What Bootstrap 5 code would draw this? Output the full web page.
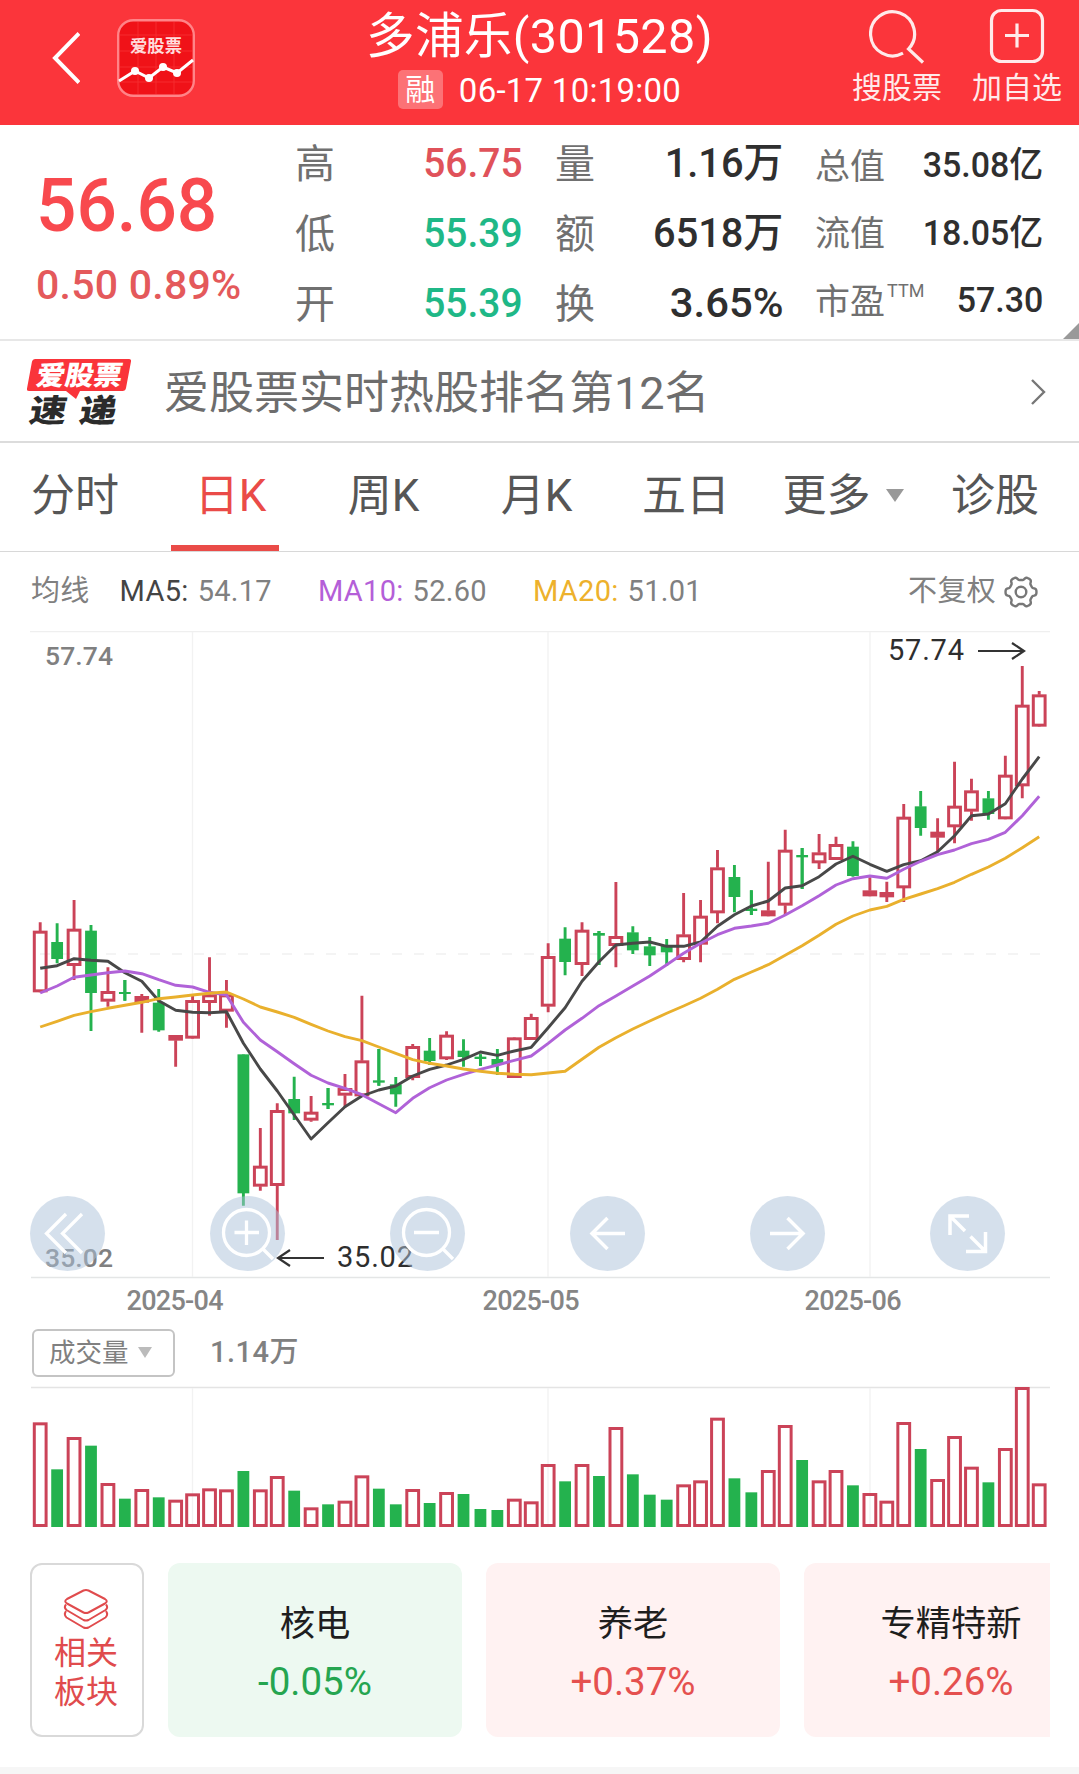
<!DOCTYPE html>
<html lang="zh-CN">
<head>
<meta charset="utf-8">
<meta name="viewport" content="width=device-width, initial-scale=1">
<title>多浦乐(301528)</title>
<link href="https://cdn.jsdelivr.net/npm/bootstrap@5.3.0/dist/css/bootstrap.min.css" rel="stylesheet">
<style>
  body { font-family: Roboto, "Noto Sans CJK SC", sans-serif; background: #fff; color: #333; width: 1079px; height: 1774px; overflow: hidden; }
  svg { display: block; flex: none; }
  .topbar { height: 125px; background: #fb353b; color: #fff; }
  .side { width: 240px; flex: none; }
  .side-left { height: 116px; }
  .side-right { padding: 8px 17px 0 0; gap: 30px; }
  .logo-tile { margin-left: 37px; }
  .ttl { font-size: 48.5px; line-height: 58px; margin-top: 8px; white-space: nowrap; letter-spacing: .4px; }
  .subttl { font-size: 33px; line-height: 42px; gap: 16px; white-space: nowrap; letter-spacing: .25px; }
  .subttl .when { padding-top: 4px; }
  .rong { background: rgba(255,255,255,.3); font-size: 30px; line-height: 39px; width: 45px; height: 39px; border-radius: 5px; text-align: center; }
  .act { width: 90px; font-size: 30px; line-height: 36px; color: #ffeaea; white-space: nowrap; }
  .act svg { margin-bottom: 6px; }

  .quote { height: 216px; border-bottom: 2px solid #e7e7e7; padding: 3px 36px 0 37px; gap: 32px; }
  .price-col { width: 226px; flex: none; color: #e4595b; white-space: nowrap; }
  .price { font-size: 74px; line-height: 80px; font-weight: 500; color: #f8494e; margin: 38px 0 0 -1px; transform: scaleX(.96); transform-origin: 0 0; }
  .chg { font-size: 41px; line-height: 50px; margin: 14px 0 0 -1px; font-weight: 500; letter-spacing: .25px; }
  .stat-col { width: 228px; flex: none; white-space: nowrap; }
  .stat-col > div { height: 70px; line-height: 70px; font-size: 40px; color: #707070; }
  .stat-col > div > span { padding-top: 1.5px; }
  .stat-col b { font-size: 41px; font-weight: 500; color: #2f2f2f; transform: scaleX(.97); transform-origin: 100% 0; }
  .stat-col b.pct { transform: scaleX(1.02); }
  .stat-col .up { color: #e0525a; transform: scaleX(.95); }
  .stat-col .dn { color: #1fb887; transform: scaleX(.95); }
  .stat-col.thin { padding-top: 4px; }
  .stat-col.thin > div { height: 67.5px; line-height: 67.5px; font-size: 35px; }
  .stat-col.thin b { font-size: 35px; }
  .ttm { font-size: 18px; position: relative; top: -17px; margin-left: 2px; line-height: 0; }
  .fold { position: absolute; right: 0; bottom: 0; width: 16px; height: 16px; background: #999; clip-path: polygon(100% 0, 100% 100%, 0 100%); }

  .news { height: 102px; border-bottom: 2px solid #dcdcdc; padding: 2px 33px 0 26px; }
  .news svg { overflow: visible; }
  .news-text { font-size: 45px; line-height: 60px; color: #6d6d6d; margin-left: 30px; padding-top: 4px; white-space: nowrap; }
  .tabs { height: 109px; border-bottom: 1px solid #d8d8d8; display: grid; grid-template-columns: 150px 150px 167px 139px 160px 154px 150px; }
  .tabs .tab-item { color: #565656; font-size: 44px; line-height: 102px; padding-top: 3px; height: 108px; white-space: nowrap; display: flex; justify-content: center; align-items: center; border-bottom: 6px solid transparent; }
  .tabs .tab-item.on { color: #ea4b48; border-color: #ea4b48; margin: 0 21px; padding-left: 11px; }
  .tabs svg { margin-left: 15px; }

  .ma { height: 79px; padding: 1px 41px 0 31px; font-size: 29px; color: #808080; letter-spacing: .3px; white-space: nowrap; }
  .ma span b { font-weight: 400; margin-right: 9px; }
  .ma .m5 { color: #444; } .ma .m10 { color: #b45fd8; } .ma .m20 { color: #edb12c; }
  .gap-a { margin-right: 30px; } .gap-b { margin-right: 46px; }
  .nav-tools { position: absolute; left: 30px; right: 74px; bottom: 8px; }
  .nav-tools span { width: 75px; height: 75px; border-radius: 50%; background: rgba(171,193,217,.5); }
  .volhead { height: 59px; padding-left: 32px; }
  .volsel { width: 143px; height: 48px; border: 2px solid #c4c4c4; border-radius: 6px; font-size: 26.5px; color: #808080; white-space: nowrap; padding-left: 15px; }
  .volsel svg { margin-left: 9px; }
  .volnow { font-size: 29px; font-weight: 500; color: #808080; margin-left: 35px; letter-spacing: .5px; }

  .sectors { margin: 36px 29px 0 30px; gap: 24px; overflow: hidden; }
  .sec-btn { width: 114px; height: 174px; flex: none; border: 2px solid #d9d9d9; border-radius: 12px; color: #e04b4d; font-size: 32px; line-height: 39px; padding: 23px 2px 0 0; }
  .sec-btn svg { margin-bottom: 4px; }
  .sec { width: 294px; height: 174px; flex: none; border-radius: 12px; background: #fff2f2; text-align: center; padding-top: 35px; white-space: nowrap; }
  .sec div { font-size: 35.3px; line-height: 52px; color: #1e1e1e; }
  .sec p { font-size: 38.5px; line-height: 52px; margin: 6px 0 0; color: #e5504f; }
  .sec.down { background: #edf9f1; }
  .sec.down p { color: #25a550; }
  .foot { height: 7px; margin-top: 30px; background: #f6f6f6; }
</style>
<script src="https://cdn.jsdelivr.net/npm/bootstrap@5.3.0/dist/js/bootstrap.bundle.min.js"></script>
</head>
<body>
<header class="topbar d-flex">
  <div class="side side-left d-flex align-items-center">
    <svg width="80" height="60" viewBox="0 28 80 60" fill="none" stroke="#fff" stroke-width="4"><path d="M79 33.500L55 58L79 82.500"/></svg>
    <svg class="logo-tile" width="78" height="78" viewBox="0 0 78 78">
      <rect x="1.200" y="1.200" width="75.600" height="75.600" rx="15" fill="#f01218" stroke="#ff8488" stroke-width="2.400"/>
      <path d="M21 3V75M39 3V75M57 3V75M3 16H75M3 32H75M3 48H75M3 63H75" stroke="#ff4a4a" stroke-width="1" opacity=".45"/>
      <text x="39" y="32.500" text-anchor="middle" font-family="Noto Sans CJK SC" font-weight="700" font-size="17.300" fill="#ffdcdc">爱股票</text>
      <path d="M2 62L18 52L32 59L46 48L60 54L76 41" fill="none" stroke="#fff" stroke-width="3"/>
      <g fill="#fff"><circle cx="18" cy="52" r="4"/><circle cx="32" cy="59" r="4"/><circle cx="46" cy="48" r="4"/><circle cx="60" cy="54" r="4"/></g>
    </svg>
  </div>
  <div class="flex-grow-1 d-flex flex-column align-items-center">
    <div class="ttl">多浦乐(301528)</div>
    <div class="subttl d-flex align-items-center"><span class="rong">融</span><span class="when">06-17 10:19:00</span></div>
  </div>
  <div class="side side-right d-flex justify-content-end">
    <div class="act d-flex flex-column align-items-center">
      <svg width="56" height="56" viewBox="0 0 56 56" fill="none" stroke="#ffeaea" stroke-width="3.200"><path d="M34 45.200A22 22 0 1 1 39.500 41L54 54.500"/></svg>搜股票
    </div>
    <div class="act d-flex flex-column align-items-center">
      <svg width="56" height="56" viewBox="0 0 56 56" fill="none" stroke="#ffeaea" stroke-width="3.200"><rect x="2.500" y="2.500" width="51" height="51" rx="10"/><path d="M28 15.500V39.500M16 27.500H40"/></svg>加自选
    </div>
  </div>
</header>

<section class="quote d-flex position-relative">
  <div class="price-col"><div class="price">56.68</div><div class="chg">0.50 0.89%</div></div>
  <div class="stat-col">
    <div class="d-flex justify-content-between"><span>高</span><b class="up">56.75</b></div>
    <div class="d-flex justify-content-between"><span>低</span><b class="dn">55.39</b></div>
    <div class="d-flex justify-content-between"><span>开</span><b class="dn">55.39</b></div>
  </div>
  <div class="stat-col">
    <div class="d-flex justify-content-between"><span>量</span><b>1.16万</b></div>
    <div class="d-flex justify-content-between"><span>额</span><b>6518万</b></div>
    <div class="d-flex justify-content-between"><span>换</span><b class="pct">3.65%</b></div>
  </div>
  <div class="stat-col thin">
    <div class="d-flex justify-content-between"><span>总值</span><b>35.08亿</b></div>
    <div class="d-flex justify-content-between"><span>流值</span><b>18.05亿</b></div>
    <div class="d-flex justify-content-between"><span>市盈<span class="ttm">TTM</span></span><b>57.30</b></div>
  </div>
  <i class="fold"></i>
</section>

<section class="news d-flex align-items-center">
  <svg width="108" height="72" viewBox="26 356 108 72">
    <path d="M35 359H129Q131.500 359 131 361.500L126 388Q125.500 391 122.500 391H80L76 399L66 391H29Q26.500 391 27 388.500L32 361.500Q32.500 359 35 359Z" fill="#fa343a"/>
    <g font-family="Noto Sans CJK SC" font-weight="900">
      <text transform="translate(35 384.500) skewX(-10)" font-size="27" textLength="86" lengthAdjust="spacingAndGlyphs" fill="#fff">爱股票</text>
      <text transform="translate(28 422) skewX(-10) scale(1.120 .960)" font-size="33" fill="#2b2b2b">速</text>
      <text transform="translate(78 422) skewX(-10) scale(1.120 .960)" font-size="33" fill="#2b2b2b">递</text>
    </g>
  </svg>
  <div class="news-text flex-grow-1">爱股票实时热股排名第12名</div>
  <svg width="16" height="28" viewBox="0 0 16 28" fill="none" stroke="#777" stroke-width="2.400"><path d="M2 2L14 14L2 26"/></svg>
</section>

<nav class="tabs">
  <div class="tab-item">分时</div><div class="tab-item on">日K</div><div class="tab-item">周K</div><div class="tab-item">月K</div><div class="tab-item">五日</div>
  <div class="tab-item">更多<svg width="18" height="13" viewBox="0 0 18 13"><path d="M0 0H18L9 13Z" fill="#999"/></svg></div><div class="tab-item">诊股</div>
</nav>

<div class="ma d-flex align-items-center">
  <span class="gap-a">均线</span>
  <span class="gap-b"><b class="m5">MA5:</b>54.17</span>
  <span class="gap-b"><b class="m10">MA10:</b>52.60</span>
  <span><b class="m20">MA20:</b>51.01</span>
  <span class="ms-auto me-2">不复权</span>
  <svg width="34" height="34" viewBox="-17 -17 34 34" fill="none" stroke="#777" stroke-width="2.400" stroke-linejoin="round"><circle r="5.300"/><path id="gear"/></svg>
</div>

<div class="position-relative">
  <svg id="kline" width="1079" height="648" viewBox="0 631 1079 648"></svg>
  <div class="nav-tools d-flex justify-content-between">
    <span><svg width="75" height="75" viewBox="0 0 75 75" fill="none" stroke="#fff" stroke-width="3.300"><path d="M36 18L16.500 37.500L36 57M52 18L32.500 37.500L52 57"/></svg></span>
    <span><svg width="75" height="75" viewBox="0 0 75 75" fill="none" stroke="#fff" stroke-width="3.300"><circle cx="36.500" cy="36.500" r="23"/><path d="M53 53L63 63M24.500 36.500H49M36.500 24.500V49"/></svg></span>
    <span><svg width="75" height="75" viewBox="0 0 75 75" fill="none" stroke="#fff" stroke-width="3.300"><circle cx="36.500" cy="36.500" r="23"/><path d="M53 53L63 63M24 36.500H49"/></svg></span>
    <span><svg width="75" height="75" viewBox="0 0 75 75" fill="none" stroke="#fff" stroke-width="3.500"><path d="M37.500 22L22 37.500L37.500 53M22 37.500H55"/></svg></span>
    <span><svg width="75" height="75" viewBox="0 0 75 75" fill="none" stroke="#fff" stroke-width="3.500"><path d="M37.500 22L53 37.500L37.500 53M53 37.500H20"/></svg></span>
    <span><svg width="75" height="75" viewBox="0 0 75 75" fill="none" stroke="#fff" stroke-width="3.500"><path d="M39 20H20V39M20 20L35 35M36 55.500H55.500V36M55.500 55.500L40.500 40.500"/></svg></span>
  </div>
</div>
<svg width="1079" height="44" viewBox="0 1279 1079 44" fill="#858585" font-size="27" font-weight="500">
  <text x="175" y="1309.500" text-anchor="middle" textLength="97">2025-04</text><text x="531" y="1309.500" text-anchor="middle" textLength="97">2025-05</text><text x="853" y="1309.500" text-anchor="middle" textLength="97">2025-06</text>
</svg>
<div class="volhead d-flex align-items-center">
  <div class="volsel d-flex align-items-center">成交量<svg width="14" height="11" viewBox="0 0 14 11"><path d="M0 0H14L7 11Z" fill="#bbb"/></svg></div>
  <div class="volnow">1.14万</div>
</div>
<svg id="vol" width="1079" height="145" viewBox="0 1382 1079 145"></svg>

<section class="sectors d-flex">
  <div class="sec-btn d-flex flex-column align-items-center">
    <svg width="46" height="42" viewBox="0 0 46 42" fill="none" stroke="#e04b4d" stroke-width="2" stroke-linejoin="round"><path d="M20.500 2.500Q23 1.300 25.500 2.500L42 11Q45.500 13 42 15.500L25.500 24.500Q23 25.500 20.500 24.500L4 15.500Q.5 13 4 11Z"/><path d="M3 16.500Q.5 19.500 3.500 22L20.500 32Q23 33 25.500 32L42.500 22Q45.500 19.500 43 16.500"/><path d="M3 23Q.5 27 3.500 29.500L20.500 39.500Q23 40.500 25.500 39.500L42.500 29.500Q45.500 27 43 23"/></svg>
    <span>相关</span><span>板块</span>
  </div>
  <div class="sec down"><div>核电</div><p>-0.05%</p></div>
  <div class="sec"><div>养老</div><p>+0.37%</p></div>
  <div class="sec"><div>专精特新</div><p>+0.26%</p></div>
</section>
<div class="foot"></div>

<script>
  const RED = '#cb4358', GREEN = '#24b24e', STEP = 999 / 59;
  const X = i => 40.2 + i * STEP;
  // direction, high, body top, body bottom, low: thirds of a pixel below the band's base line
  const early = `R 187 212 397 397|G 190 246 297 310|R 120 206 318 360|G 195 212 399 513|R 322 393 425 440|G 360 396 402 422|R 402 408 428 518|G 387 428 511 515|R 525 525 542 620|R 408 420 536 536|R 292 403 429 467|R 360 403 455 503|G 583 583 1000 1037|R 804 917 980 992|R 730 750 978 1140|G 650 717 760 780|R 708 755 782 785|G 684 729 736 747|R 642 684 707 742|R 407 601 709 709|G 567 661 668 677|G 651 673 703 740|R 552 558 654 661|G 534 572 603 615|R 514 524 598 600|G 538 572 591 620|G 583 590 597 618|G 567 597 615 645|R 532 532 654 654|R 461 471 540 540|R 250 288 440 457|G 202 236 306 346|R 187 209 315 348|G 213 219 227 315|R 66 228 258 322|G 199 217 271 282|G 231 259 286 318|G 237 258 277 318|R 99 223 300 307|R 120 167 254 307`;
  const late = `R 690 742 880 910|G 735 771 831 877|G 811 866 873 885|R 725 871 889 889|R 629 689 857 885|G 684 705 712 807|R 642 697 730 747|R 650 672 720 720|G 664 680 768 770|R 772 811 829 829|R 785 816 832 846|R 552 590 805 846|G 513 559 624 647|R 595 635 653 695|R 425 557 622 670|R 476 511 575 602|G 513 535 582 599|R 407 464 598 598|R 138 254 499 535|R 213 223 320 320`;
  const parse = (s, base) => s.split('|').map(r => { const [d, ...v] = r.split(' '); return [d, ...v.map(n => base + n / 3)]; });
  const candles = parse(early, 860).concat(parse(late, 620));
  const line = (a, b) => a.map(n => 860 + n / 3).concat(b.map(n => 620 + n / 3));
  const ma5 = line([325,317,296,301,304,338,364,422,451,457,458,455,550,627,693,765,837,788,740,708,690,678,648,628,615,598,576,586,573,562,503,443,364,305,255,250,246,259,259,246],[919,884,858,843,804,797,770,732,709,733,754,734,722,695,647,587,582,551,477,410]);
  const ma10 = line([399,378,352,345,338,333,341,359,376,381,397,405,487,540,575,611,646,669,685,704,731,758,715,683,660,643,628,615,601,588,550,510,475,437,408,378,348,314,280,250],[944,925,918,910,885,857,827,795,776,768,775,748,724,704,690,671,658,637,587,529]);
  const ma20 = line([501,484,466,455,445,436,427,416,411,405,400,396,417,441,456,472,493,513,530,542,561,580,599,610,618,627,634,640,643,644,639,634,598,562,533,507,483,460,438,415],[1108,1078,1056,1034,1006,977,946,913,888,870,859,838,822,806,787,763,741,715,683,650]);
  const vol = [427,568,471,497,609,656,627,652,659,640,625,628,573,628,588,632,682,673,662,586,626,673,627,669,636,642,687,690,656,664,552,604,552,588,441,583,644,659,613,601,413,595,637,570,435,540,601,570,616,639,662,426,507,597,468,560,607,504,321,610];

  const body = (d, x, t, b) => {
    if (d === 'G') return `<rect x="${x - 5.9}" y="${t}" width="11.800" height="${b - t}" fill="${GREEN}"/>`;
    const h = b - t;
    if (h < 7) return `<rect x="${x - 7.3}" y="${t}" width="14.600" height="${h}" fill="${RED}"/>`;
    return `<rect x="${x - 5.9}" y="${t + 1.5}" width="11.800" height="${h - 3}" fill="none" stroke="${RED}" stroke-width="3"/>`;
  };
  const path = (a, c) => `<path d="M${a.map((y, i) => X(i).toFixed(1) + ' ' + y.toFixed(1)).join('L')}" fill="none" stroke="${c}" stroke-width="2.900" stroke-linejoin="round"/>`;
  const grid = (t, b) => [192.5, 548, 870].map(x => `<path d="M${x} ${t}V${b}" stroke="#f2f2f2" stroke-width="1.300"/>`).join('');

  let k = '<path d="M30 631.500H1050" stroke="#efefef" stroke-width="1.600"/><path d="M31 1277.500H1050" stroke="#e4e6e6" stroke-width="1.400"/>' + grid(632, 1277) +
    '<path d="M40 954H1040" stroke="#f1f1f1" stroke-width="1.300" stroke-dasharray="10 12"/>';
  candles.forEach(([d, h, t, b, l], i) => {
    const x = X(i), c = d === 'G' ? GREEN : RED;
    // flat green sessions are drawn as a cross
    const flat = d === 'G' && b - t < 3;
    k += `<path d="M${x} ${h}V${t + .5}M${x} ${b - .5}V${l}" stroke="${c}" stroke-width="2.900"/>` + body(d, x, t, b);
    if (flat) k += `<path d="M${x} ${h}V${l}" stroke="${c}" stroke-width="2.900"/>`;
  });
  k += path(ma5, '#484848') + path(ma10, '#b062d8') + path(ma20, '#e9b02d');
  k += '<g font-size="26.500" font-weight="500" fill="#808080"><text x="45" y="665" textLength="68">57.74</text><text x="45" y="1267" textLength="68">35.02</text></g>' +
    '<g font-size="29" fill="#2e2e2e"><text x="888" y="660" textLength="76">57.74</text><text x="337" y="1267" textLength="76">35.02</text></g>' +
    '<path d="M978 651H1023M1012 643L1024 651L1012 659M324 1258H279M290 1250L278 1258L290 1266" fill="none" stroke="#333" stroke-width="2.200"/>';
  document.getElementById('kline').innerHTML = k;

  document.getElementById('vol').innerHTML = '<path d="M31 1387.500H1050" stroke="#e4e4e4" stroke-width="1.300"/>' + grid(1388, 1527) +
    vol.map((v, i) => body(candles[i][0], X(i), 1280 + v / 3, 1527)).join('');

  // six-lobed gear outline
  let g = '';
  for (let a = 0; a < 360; a += 3) {
    const t = a * Math.PI / 180, s = Math.cos(6 * t), r = 13.7 + 1.8 * Math.tanh(2.2 * s);
    g += (a ? 'L' : 'M') + (r * Math.cos(t)).toFixed(2) + ' ' + (r * Math.sin(t)).toFixed(2);
  }
  document.getElementById('gear').setAttribute('d', g + 'Z');
</script>
</body>
</html>
